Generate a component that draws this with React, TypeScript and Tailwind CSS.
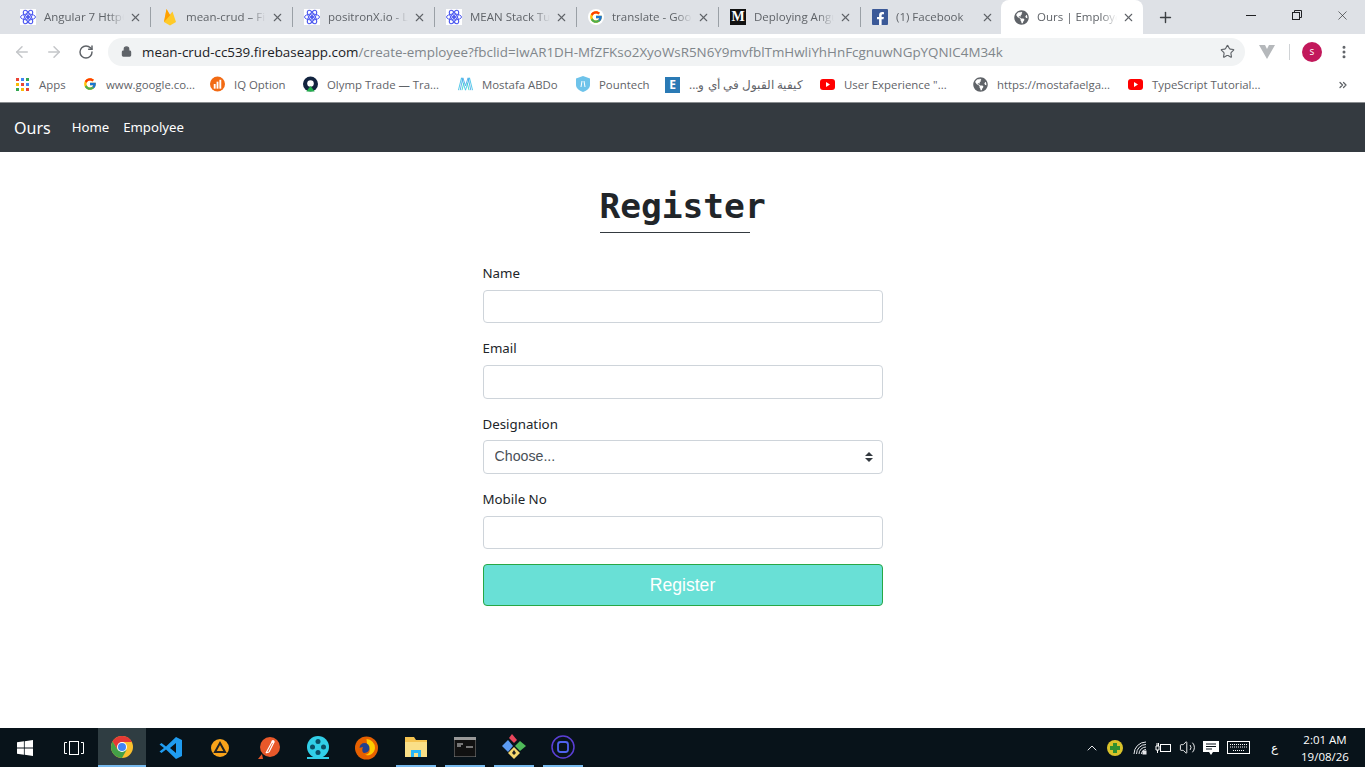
import React from 'react';
import { ArrowLeft, ArrowRight, ChevronUp, ChevronsRight, Lock, MoreVertical, Plus, RotateCw, Star, Volume2, X } from 'lucide-react';
import { FcGoogle } from 'react-icons/fc';
import { FaFacebookF, FaGlobeAmericas } from 'react-icons/fa';

const ReactIcon = () => (
  <svg width="16" height="16" viewBox="0 0 16 16" fill="none" stroke="#4f5bf0" strokeWidth="1" className="bg-white">
    <ellipse cx="8" cy="8" rx="7.5" ry="3" />
    <ellipse cx="8" cy="8" rx="7.5" ry="3" transform="rotate(60 8 8)" />
    <ellipse cx="8" cy="8" rx="7.5" ry="3" transform="rotate(120 8 8)" />
    <circle cx="8" cy="8" r="1.5" fill="#4f5bf0" />
  </svg>
);

const FirebaseIcon = () => (
  <svg width="14" height="18" viewBox="0 0 14 18">
    <path d="M1 14 L3.5 1 L7 7 L9.5 3.5 L13 14 L7 17.5 Z" fill="#ffca28" />
    <path d="M1 14 L3.5 1 L7 7 Z" fill="#ffa000" />
    <path d="M1 14 L9.5 3.5 L7 7 Z" fill="#f57c00" />
  </svg>
);

const GoogleTabIcon = () => (
  <span className="flex h-4 w-4 items-center justify-center rounded-full bg-white">
    <FcGoogle size={14} />
  </span>
);

const MediumIcon = () => (
  <span className="flex h-4 w-4 items-center justify-center bg-[#111] font-['Liberation_Serif',serif] text-[14px] leading-none font-bold text-white">M</span>
);

const FacebookIcon = () => (
  <span className="flex h-4 w-4 items-end justify-end rounded-[1px] bg-[#3b5998] pr-[1px] text-white">
    <FaFacebookF size={13} />
  </span>
);

const Globe = () => <FaGlobeAmericas size={15} color="#5f6368" />;

const AppsIcon = () => {
  const colors = ['#ea4335', '#4285f4', '#34a853', '#fbbc05', '#ea4335', '#4285f4', '#34a853', '#fbbc05', '#ea4335'];
  return (
    <span className="grid grid-cols-3 gap-[2px]">
      {colors.map((c, i) => (
        <svg key={i} width="3" height="3"><rect width="3" height="3" fill={c} /></svg>
      ))}
    </span>
  );
};

const IqIcon = () => (
  <svg width="16" height="16" viewBox="0 0 16 16">
    <circle cx="8" cy="8" r="8" fill="#f26a13" />
    <rect x="4" y="8" width="2" height="5" fill="#fff" />
    <rect x="7" y="5.5" width="2" height="7.5" fill="#fff" />
    <rect x="10" y="3.5" width="2" height="9.5" fill="#fff" />
  </svg>
);

const OlympIcon = () => (
  <svg width="16" height="16" viewBox="0 0 16 16">
    <circle cx="8" cy="8" r="8" fill="#12233f" />
    <circle cx="8" cy="7.5" r="3.5" fill="#fff" />
    <path d="M3.5 16 L8 10 L12.5 16 Z" fill="#22b14c" />
  </svg>
);

const MostafaIcon = () => (
  <svg width="17" height="16" viewBox="0 0 17 16" fill="none" strokeWidth="1">
    <path d="M0.5 15 L4 1 L8.5 15 L13 1 L16.5 15" stroke="#3ec1e6" />
    <path d="M2.5 15 L5.5 1 L8.5 10 L11.5 1 L14.5 15" stroke="#49a6e8" />
    <path d="M4.5 15 L6.5 7 M12.5 15 L10.5 7" stroke="#36d3c8" />
  </svg>
);

const ShieldIcon = () => (
  <svg width="14" height="16" viewBox="0 0 14 16">
    <path d="M7 0 L14 2.5 V9 C14 12.5 10 15 7 16 C4 15 0 12.5 0 9 V2.5 Z" fill="#6ec3ea" />
    <path d="M5 11 L6 5 M9 11 L8 5" stroke="#fff" strokeWidth="1" />
  </svg>
);

const EIcon = () => (
  <span className="flex h-4 w-4 items-center justify-center bg-[#2a7ab5] text-[12px] leading-none font-bold text-white">E</span>
);

const YoutubeIcon = () => (
  <svg width="15" height="11" viewBox="0 0 15 11">
    <rect width="15" height="11" rx="3" fill="#f00" />
    <path d="M6 3 L10 5.5 L6 8 Z" fill="#fff" />
  </svg>
);

const tabs: { icon: React.ReactNode; title: string; active?: boolean; sep?: boolean }[] = [
  { icon: <ReactIcon />, title: 'Angular 7 HttpClient', sep: true },
  { icon: <FirebaseIcon />, title: 'mean-crud – Firebase', sep: true },
  { icon: <ReactIcon />, title: 'positronX.io - Learn', sep: true },
  { icon: <ReactIcon />, title: 'MEAN Stack Tutorial', sep: true },
  { icon: <GoogleTabIcon />, title: 'translate - Google', sep: true },
  { icon: <MediumIcon />, title: 'Deploying Angular', sep: true },
  { icon: <FacebookIcon />, title: '(1) Facebook' },
  { icon: <Globe />, title: 'Ours | Employee', active: true },
];

const bookmarks: { icon: React.ReactNode; label: string; w: string; rtl?: boolean }[] = [
  { icon: <AppsIcon />, label: 'Apps', w: 'w-[67px]' },
  { icon: <FcGoogle size={14} />, label: 'www.google.co...', w: 'w-[128px]' },
  { icon: <IqIcon />, label: 'IQ Option', w: 'w-[93px]' },
  { icon: <OlympIcon />, label: 'Olymp Trade — Tra...', w: 'w-[155px]' },
  { icon: <MostafaIcon />, label: 'Mostafa ABDo', w: 'w-[117px]' },
  { icon: <ShieldIcon />, label: 'Pountech', w: 'w-[90px]' },
  { icon: <EIcon />, label: 'كيفية القبول في أي و...', w: 'w-[155px]', rtl: true },
  { icon: <YoutubeIcon />, label: 'User Experience "...', w: 'w-[153px]' },
  { icon: <Globe />, label: 'https://mostafaelga...', w: 'w-[155px]' },
  { icon: <YoutubeIcon />, label: 'TypeScript Tutorial...', w: 'w-[150px]' },
];

const ChromeBar = () => (
  <div className="font-['Open_Sans',sans-serif]">
    <div className="flex h-[34px] bg-[#dee1e6] pl-2">
      {tabs.map((t) => (
        <div
          key={t.title}
          className={`flex h-[34px] w-[142px] shrink-0 items-center ${t.active ? 'rounded-t-lg bg-white' : ''} ${t.title === '(1) Facebook' ? 'mr-[-1px]' : ''}`}
        >
          <span className="flex w-[36px] shrink-0 justify-center pl-[4px]">{t.icon}</span>
          <span className="w-[80px] shrink-0 overflow-hidden text-[11.5px] whitespace-nowrap text-[#5f6368] [mask-image:linear-gradient(to_right,black_80%,transparent)]">
            {t.title}
          </span>
          <span className="flex w-[22px] shrink-0 justify-center">
            <X size={13} strokeWidth={2} color="#5f6368" />
          </span>
          {t.sep && <span className="mr-[-1px] ml-auto h-[20px] w-px bg-[#9aa0a6]" />}
        </div>
      ))}
      <div className="flex w-[44px] items-center justify-center">
        <Plus size={17} strokeWidth={2} color="#3c4043" />
      </div>
      <div className="ml-auto flex text-[#202124]">
        <div className="flex h-[30px] w-[46px] items-center justify-center pt-0">
          <span className="h-px w-[10px] bg-[#202124]" />
        </div>
        <div className="flex h-[30px] w-[46px] items-center justify-center">
          <svg width="10" height="10" viewBox="0 0 10 10" fill="none" stroke="#202124">
            <rect x="0.5" y="2.5" width="7" height="7" />
            <path d="M2.5 2.5 V0.5 H9.5 V7.5 H7.5" />
          </svg>
        </div>
        <div className="flex h-[30px] w-[45px] items-center justify-center">
          <X size={15} strokeWidth={1} color="#202124" />
        </div>
      </div>
    </div>

    <div className="flex h-[35px] items-center bg-white">
      <div className="flex w-[108px] shrink-0 items-center pl-[13px]">
        <ArrowLeft size={18} strokeWidth={2} color="#c4c6c9" />
        <span className="w-[14px]" />
        <ArrowRight size={18} strokeWidth={2} color="#c4c6c9" />
        <span className="w-[15px]" />
        <RotateCw size={16} strokeWidth={2.2} color="#5f6368" />
      </div>
      <div className="flex h-[28px] w-[1137px] shrink-0 items-center rounded-full bg-[#f1f3f4] pl-[13px] text-[13.4px]">
        <Lock size={11} fill="#5f6368" color="#5f6368" strokeWidth={2.5} />
        <span className="mt-[1px] ml-[10px] whitespace-nowrap text-[#202124]">
          mean-crud-cc539.firebaseapp.com
          <span className="text-[#80868b]">/create-employee?fbclid=IwAR1DH-MfZFKso2XyoWsR5N6Y9mvfblTmHwliYhHnFcgnuwNGpYQNIC4M34k</span>
        </span>
        <Star size={15} strokeWidth={1.8} color="#5f6368" className="ml-auto mr-[10px]" />
      </div>
      <div className="flex flex-1 items-center">
        <svg width="16" height="14" viewBox="0 0 16 14" className="ml-[14px]">
          <path d="M0 0 H6 L8 4 L10 0 H16 L8 14 Z" fill="#b5b8bb" />
        </svg>
        <span className="ml-[14px] h-[16px] w-px bg-[#d0d3d6]" />
        <span className="ml-[12px] flex h-5 w-5 items-center justify-center rounded-full bg-[#c2185b] text-[10px] text-white">s</span>
        <MoreVertical size={16} strokeWidth={2.5} color="#5f6368" className="ml-[14px]" />
      </div>
    </div>

    <div className="flex h-[34px] items-center border-b border-[#8a8d90] bg-white pb-[2px] pl-[15px] text-[11.4px] text-[#5f6368]">
      {bookmarks.map((b) => (
        <div key={b.label} className={`flex shrink-0 items-center gap-[9px] ${b.w}`}>
          <span className="flex w-[15px] shrink-0 justify-center">{b.icon}</span>
          <span dir={b.rtl ? 'rtl' : undefined} className={`whitespace-nowrap ${b.rtl ? 'text-[12px]' : ''}`}>{b.label}</span>
        </div>
      ))}
      <ChevronsRight size={12} strokeWidth={2.5} color="#5f6368" className="ml-auto mr-[16px]" />
    </div>
  </div>
);

const Navbar = () => (
  <nav className="flex h-[49px] shrink-0 items-center bg-[#343a40] pl-[14px] font-['Noto_Sans',sans-serif] text-white">
    <span className="text-[16px]">Ours</span>
    <span className="ml-[21px] text-[13.2px]">Home</span>
    <span className="ml-[14px] text-[13.2px]">Empolyee</span>
  </nav>
);

const labelCls = "block h-[25.8px] text-[13.3px] leading-[18px] text-[#212529]";
const inputCls = "block h-[33.5px] w-full rounded-[4px] border border-[#ced4da] bg-white";

const RegisterForm = () => (
  <main className="flex flex-1 flex-col items-center bg-white font-['Noto_Sans',sans-serif]">
    <div className="mt-[32px] flex w-[166px] flex-col">
      <h1 className="font-['DejaVu_Sans_Mono',monospace] text-[34.5px] leading-[45px] font-bold text-[#212529]">Register</h1>
      <div className="mt-[3px] h-px w-[150px] bg-[#343a40]" />
    </div>
    <form className="mt-[31px] w-[400px]">
      <label className={labelCls}>Name</label>
      <input className={`${inputCls} mb-4`} />
      <label className={labelCls}>Email</label>
      <input className={`${inputCls} mb-4`} />
      <label className={labelCls}>Designation</label>
      <div className="relative mb-4">
        <select className={`${inputCls} appearance-none pl-[11px] font-['Liberation_Sans',sans-serif] text-[14.2px] text-[#495057]`}>
          <option>Choose...</option>
        </select>
        <svg width="8" height="10" viewBox="0 0 8 10" className="absolute top-[12px] right-[10px]">
          <path d="M4 0 L8 4 H0 Z M4 10 L0 6 H8 Z" fill="#343a40" />
        </svg>
      </div>
      <label className={labelCls}>Mobile No</label>
      <input className={`${inputCls} mb-[14.9px]`} />
      <button type="button" className="h-[42px] w-full rounded-[4px] border border-[#28a745] bg-[#69e0d6] font-['Liberation_Sans',sans-serif] text-[17.6px] text-white">
        Register
      </button>
    </form>
  </main>
);

const WinLogo = () => (
  <svg width="16" height="16" viewBox="0 0 16 16" fill="#fff">
    <path d="M0 2.3 L6.9 1.3 V7.6 H0 Z M7.7 1.2 L16 0 V7.6 H7.7 Z M0 8.4 H6.9 V14.7 L0 13.7 Z M7.7 8.4 H16 V16 L7.7 14.8 Z" />
  </svg>
);

const TaskView = () => (
  <svg width="20" height="14" viewBox="0 0 20 14" fill="none" stroke="#fff">
    <rect x="5.5" y="0.5" width="9" height="13" />
    <path d="M3 1.5 H0.5 V12.5 H3 M17 1.5 H19.5 V12.5 H17" />
  </svg>
);

const ChromeLogo = () => (
  <svg width="22" height="22" viewBox="0 0 22 22">
    <circle cx="11" cy="11" r="11" fill="#fbc02d" />
    <path d="M11 0 A11 11 0 0 0 1.5 5.5 L6 13 L11 6 H21 A11 11 0 0 0 11 0 Z" fill="#e53935" />
    <path d="M1.5 5.5 A11 11 0 0 0 11 22 L15.5 14 L6.5 13.5 Z" fill="#43a047" />
    <circle cx="11" cy="11" r="5" fill="#fff" />
    <circle cx="11" cy="11" r="4" fill="#4285f4" />
  </svg>
);

const VsCodeIcon = () => (
  <svg width="24" height="24" viewBox="0 0 24 24">
    <path d="M17 1 L23 4 V20 L17 23 L7 13.5 L2.5 17 L0.5 15.5 L5 12 L0.5 8.5 L2.5 7 L7 10.5 Z M17 7 L11 12 L17 17 Z" fill="#1f9cf0" fillRule="evenodd" />
  </svg>
);

const AimpIcon = () => (
  <svg width="18" height="18" viewBox="0 0 18 18">
    <circle cx="9" cy="9" r="9" fill="#f9a31a" />
    <path d="M9 4 L14 13 H4 Z" fill="none" stroke="#222" strokeWidth="2" />
  </svg>
);

const ToolIcon = () => (
  <svg width="22" height="22" viewBox="0 0 22 22">
    <circle cx="12" cy="10" r="10" fill="#e8582a" />
    <path d="M8 16 L14 5 M11 15 L16 5 M8 16 L11 15" stroke="#fff" strokeWidth="1.2" fill="none" />
    <circle cx="15" cy="4.5" r="1.6" fill="#fff" />
    <path d="M0 22 L4 17 L5 22 Z" fill="#e8582a" />
  </svg>
);

const ReelIcon = () => (
  <svg width="24" height="24" viewBox="0 0 24 24">
    <circle cx="12" cy="11" r="11" fill="#31cfe8" />
    <circle cx="12" cy="5.5" r="2.5" fill="#0b4f66" />
    <circle cx="12" cy="16.5" r="2.5" fill="#0b4f66" />
    <circle cx="6.5" cy="11" r="2.5" fill="#0b4f66" />
    <circle cx="17.5" cy="11" r="2.5" fill="#0b4f66" />
    <path d="M1 23 H23 V21 H1 Z" fill="#31cfe8" />
  </svg>
);

const FirefoxIcon = () => (
  <svg width="23" height="24" viewBox="0 0 23 24">
    <circle cx="11.5" cy="12" r="11.5" fill="#e66000" />
    <path d="M11.5 3 A9 9 0 0 1 20 12 A8 8 0 0 1 9 19 C14 19 16 15 14 12 L10 11 L12 8 Z" fill="#ffcb00" />
    <circle cx="9.5" cy="12" r="5" fill="#23408f" />
    <path d="M4 12 C4 18 9 21 14 20 C8 19 6 15 8 11 Z" fill="#e66000" />
  </svg>
);

const FolderIcon = () => (
  <svg width="22" height="20" viewBox="0 0 22 20">
    <path d="M0 0 H9 L11 3 H22 V20 H0 Z" fill="#f5c451" />
    <path d="M0 5 H22 V20 H0 Z" fill="#fadf87" />
    <path d="M6 20 V13 H16 V20 H13 V16 H9 V20 Z" fill="#29b6f6" />
  </svg>
);

const CmdIcon = () => (
  <svg width="22" height="20" viewBox="0 0 22 20">
    <rect width="22" height="20" fill="#111" stroke="#888" />
    <rect y="0" width="22" height="3" fill="#999" />
    <path d="M3 7 H9 M3 9 H7 M12 10 H19" stroke="#ddd" strokeWidth="1" />
  </svg>
);

const GitKrakenIcon = () => (
  <svg width="24" height="25" viewBox="0 0 24 25">
    <path d="M0 12 L6 6 L11 12 L6 18 Z" fill="#5b9bf2" />
    <path d="M7 4 L10 0 L15 6 L12 9 Z" fill="#e8465c" />
    <path d="M13 12 L18 7 L24 12 L18 17 Z" fill="#4fbb5a" />
    <path d="M6 19 L12 13 L18 19 L12 25 Z" fill="#f5d76e" />
    <path d="M10 19 L12 16 L14 19 L12 21 Z" fill="#222" />
  </svg>
);

const RingIcon = () => (
  <svg width="24" height="24" viewBox="0 0 24 24" fill="none">
    <circle cx="12" cy="12" r="11" stroke="#5b3fd6" strokeWidth="1.5" />
    <rect x="7" y="7" width="10" height="10" rx="2.5" stroke="#4f63f0" strokeWidth="1.8" />
  </svg>
);

const KeyboardIcon = () => (
  <svg width="23" height="13" viewBox="0 0 23 13" fill="none" stroke="#fff">
    <rect x="0.5" y="0.5" width="22" height="12" />
    <path d="M3 3.5 H20 M3 6 H20 M6 9.5 H17" strokeDasharray="1 1" />
  </svg>
);

const apps: { icon: React.ReactNode; running?: boolean; active?: boolean }[] = [
  { icon: <WinLogo /> },
  { icon: <TaskView /> },
  { icon: <ChromeLogo />, active: true },
  { icon: <VsCodeIcon /> },
  { icon: <AimpIcon /> },
  { icon: <ToolIcon /> },
  { icon: <ReelIcon /> },
  { icon: <FirefoxIcon /> },
  { icon: <FolderIcon />, running: true },
  { icon: <CmdIcon />, running: true },
  { icon: <GitKrakenIcon />, running: true },
  { icon: <RingIcon />, running: true },
];

const Taskbar = () => (
  <footer className="flex h-[39px] shrink-0 items-stretch bg-[#08131a] font-['Open_Sans',sans-serif] text-white">
    <div className="flex">
      {apps.map((a, i) => (
        <div
          key={i}
          className={`flex flex-col items-center ${a.active ? 'w-[48px] border-b-[2px] border-[#76b9ed] bg-[#2f3d42]' : 'w-[49px]'}`}
        >
          <div className="flex flex-1 items-center justify-center">{a.icon}</div>
          {a.running && <span className="h-[2px] w-[40px] bg-[#76b9ed]" />}
        </div>
      ))}
    </div>
    <div className="ml-auto flex items-center pr-[15px]">
      <ChevronUp size={16} strokeWidth={1.5} color="#e5e7eb" />
      <svg width="16" height="16" viewBox="0 0 16 16" className="ml-[7px]">
        <circle cx="8" cy="8" r="8" fill="#d9c32a" />
        <path d="M6 3 H10 V6 H13 V10 H10 V13 H6 V10 H3 V6 H6 Z" fill="#2f8f2f" />
      </svg>
      <svg width="14" height="14" viewBox="0 0 14 14" fill="none" stroke="#e5e7eb" className="ml-[10px]">
        <path d="M1 13 A12 12 0 0 1 13 1 M3.5 13 A9.5 9.5 0 0 1 13 3.5 M6 13 A7 7 0 0 1 13 6 M8.5 13 A4.5 4.5 0 0 1 13 8.5" />
        <rect x="10" y="10" width="3" height="3" fill="#e5e7eb" />
      </svg>
      <svg width="16" height="12" viewBox="0 0 16 12" fill="none" stroke="#fff" className="ml-[8px]">
        <rect x="5.5" y="2.5" width="10" height="7" />
        <path d="M1 4 H4 V8 H1 Z M2 4 V1 M3.5 4 V1 M2.5 8 V11" />
      </svg>
      <Volume2 size={17} strokeWidth={1.3} color="#fff" className="ml-[8px]" />
      <svg width="16" height="16" viewBox="0 0 16 16" className="ml-[7px]">
        <path d="M0 1 H16 V12 H10 L8 15 L6 12 H0 Z" fill="#fff" />
        <path d="M3 4 H13 M3 6.5 H13 M3 9 H9" stroke="#08131a" />
      </svg>
      <span className="ml-[8px] flex"><KeyboardIcon /></span>
      <span className="ml-[21px] text-[12px]">ع</span>
      <div className="ml-[22px] flex w-[50px] flex-col items-center text-[11.5px] leading-[17px]">
        <span>2:01 AM</span>
        <span>19/08/26</span>
      </div>
    </div>
  </footer>
);

export default function App() {
  return (
    <div className="flex h-[767px] w-[1365px] flex-col overflow-hidden bg-white">
      <ChromeBar />
      <Navbar />
      <RegisterForm />
      <Taskbar />
    </div>
  );
}
